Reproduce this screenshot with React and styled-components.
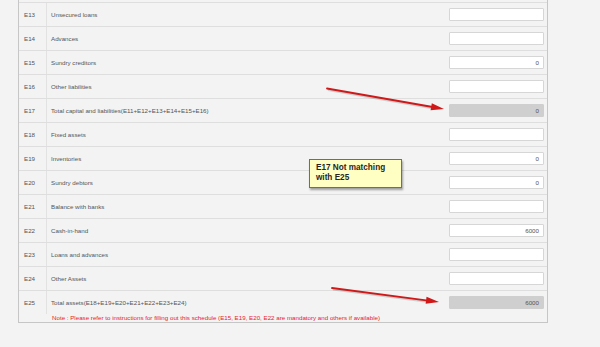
import styled, { createGlobalStyle } from "styled-components"

const GlobalStyle = createGlobalStyle`
    body{
        margin: 0;
        background-color: #f3f3f3;
        font-family: "Liberation Sans", Arial, sans-serif;
    }
`

const Page = styled.div`
    position: relative;
    width: 600px;
    height: 347px;
    overflow: hidden;
    padding-left: 18px;
    box-sizing: border-box;
`

const Panel = styled.div`
    width: 530px;
    box-sizing: border-box;
    padding-top: 2px;
    border-left: 1px solid #c6c6c6;
    border-right: 1px solid #c6c6c6;
    border-bottom: 1px solid #c6c6c6;
    background-color: #f3f3f3;
`

const Row = styled.div`
    display: flex;
    align-items: stretch;
    height: 24px;
    border-top: 1px solid #dedede;
    box-sizing: border-box;
`

const Code = styled.div`
    width: 28px;
    flex: none;
    box-sizing: border-box;
    padding-left: 5px;
    display: flex;
    align-items: center;
    border-right: 1px solid #e2e2e2;
    font-size: 6.2px;
    color: #555;
`

const Label = styled.div`
    flex: 1;
    padding-left: 4px;
    display: flex;
    align-items: center;
    font-size: 6.2px;
    color: #555;
`

const Field = styled.div`
    width: 98px;
    flex: none;
    display: flex;
    align-items: center;
`

const Input = styled.div`
    width: 95px;
    height: 13px;
    box-sizing: border-box;
    border: 1px solid ${p => (p.$readOnly ? "#cfcfcf" : "#d6d6d6")};
    border-radius: 1px;
    background-color: ${p => (p.$readOnly ? "#cfcfcf" : "#ffffff")};
    font-size: 6.2px;
    color: #555;
    text-align: right;
    padding-right: 4px;
    line-height: 11px;
`

const Note = styled.div`
    padding: 0 0 1px 33px;
    line-height: 7px;
    font-size: 6.2px;
    color: #e8202a;
`

const Callout = styled.div`
    position: absolute;
    left: 309px;
    top: 159px;
    width: 93px;
    height: 29px;
    box-sizing: border-box;
    padding: 3px 0 0 6px;
    background-color: #ffffc4;
    border: 1px solid #c9474a;
    box-shadow: 1px 2px 2px rgba(0, 0, 0, 0.35);
    font-size: 8.2px;
    font-weight: bold;
    line-height: 10px;
    color: #262626;
`

const ArrowLayer = styled.svg`
    position: absolute;
    left: 0;
    top: 0;
    pointer-events: none;
`

const rows = [
    { code: "E13", label: "Unsecured loans", value: "" },
    { code: "E14", label: "Advances", value: "" },
    { code: "E15", label: "Sundry creditors", value: "0" },
    { code: "E16", label: "Other liabilities", value: "" },
    { code: "E17", label: "Total capital and liabilities(E11+E12+E13+E14+E15+E16)", value: "0", readOnly: true },
    { code: "E18", label: "Fixed assets", value: "" },
    { code: "E19", label: "Inventories", value: "0" },
    { code: "E20", label: "Sundry debtors", value: "0" },
    { code: "E21", label: "Balance with banks", value: "" },
    { code: "E22", label: "Cash-in-hand", value: "6000" },
    { code: "E23", label: "Loans and advances", value: "" },
    { code: "E24", label: "Other Assets", value: "" },
    { code: "E25", label: "Total assets(E18+E19+E20+E21+E22+E23+E24)", value: "6000", readOnly: true },
]

const Arrow = ({ x1, y1, x2, y2 }) => {
    const a = Math.atan2(y2 - y1, x2 - x1)
    const len = 13
    const w = 3.5
    const bx = x2 - len * Math.cos(a)
    const by = y2 - len * Math.sin(a)
    const px = -Math.sin(a) * w
    const py = Math.cos(a) * w
    return (
        <g>
            <line x1={x1 + 1} y1={y1 + 1.5} x2={bx + 1} y2={by + 1.5} stroke="rgba(0,0,0,0.15)" strokeWidth="2" />
            <line x1={x1} y1={y1} x2={bx} y2={by} stroke="#d01818" strokeWidth="1.8" strokeLinecap="round" />
            <polygon
                points={`${x2},${y2} ${bx + px},${by + py} ${bx - px},${by - py}`}
                fill="#d01818"
            />
        </g>
    )
}

const App = () => {
    return (
        <>
            <GlobalStyle />
            <Page>
                <Panel>
                    {rows.map(r => (
                        <Row key={r.code}>
                            <Code>{r.code}</Code>
                            <Label>{r.label}</Label>
                            <Field>
                                <Input $readOnly={r.readOnly}>{r.value}</Input>
                            </Field>
                        </Row>
                    ))}
                    <Note>
                        Note : Please refer to instructions for filling out this schedule (E15, E19, E20, E22 are mandatory and others if available)
                    </Note>
                </Panel>
                <Callout>
                    E17 Not matching
                    <br />
                    with E25
                </Callout>
                <ArrowLayer width="600" height="347">
                    <Arrow x1={327} y1={88.5} x2={444} y2={109} />
                    <Arrow x1={332} y1={288} x2={439} y2={302} />
                </ArrowLayer>
            </Page>
        </>
    )
}

export default App
